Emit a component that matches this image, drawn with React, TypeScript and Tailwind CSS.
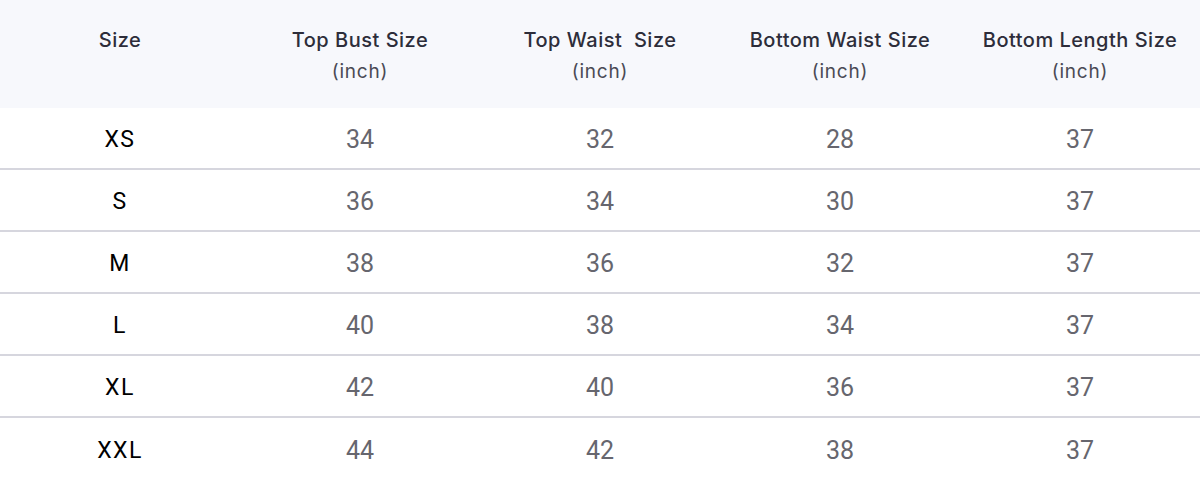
const headers: { title: string; unit?: string }[] = [
  { title: "Size" },
  { title: "Top Bust Size", unit: "(inch)" },
  { title: "Top Waist  Size", unit: "(inch)" },
  { title: "Bottom Waist Size", unit: "(inch)" },
  { title: "Bottom Length Size", unit: "(inch)" },
];

const rows: [string, number, number, number, number][] = [
  ["XS", 34, 32, 28, 37],
  ["S", 36, 34, 30, 37],
  ["M", 38, 36, 32, 37],
  ["L", 40, 38, 34, 37],
  ["XL", 42, 40, 36, 37],
  ["XXL", 44, 42, 38, 37],
];

export default function App() {
  return (
    <div className="w-[1200px] h-[482px] bg-white overflow-hidden">
      {/* header */}
      <div className="grid grid-cols-5 h-[108px] bg-[#f7f8fc] font-['Inter',sans-serif]">
        {headers.map((h) => (
          <div key={h.title} className="flex flex-col items-center pt-[25px] text-center">
            <span className="whitespace-pre text-[20px] leading-[31px] font-medium text-[#2d2d3a] tracking-[0.5px]">
              {h.title}
            </span>
            {h.unit && (
              <span className="text-[19px] leading-[31px] text-[#4a4a55] tracking-[0.8px]">{h.unit}</span>
            )}
          </div>
        ))}
      </div>

      {/* body */}
      {rows.map((r, i) => (
        <div
          key={r[0]}
          className={`grid grid-cols-5 h-[62px] items-center pt-[4px] font-['Roboto',sans-serif] ${
            i < rows.length - 1 ? "border-b-2 border-[#d6d6de]" : ""
          }`}
        >
          <div className="text-center text-[23px] text-black tracking-[1.5px]">{r[0]}</div>
          {r.slice(1).map((v, j) => (
            <div key={j} className="text-center text-[25px] text-[#66666e]">
              {v}
            </div>
          ))}
        </div>
      ))}
    </div>
  );
}
